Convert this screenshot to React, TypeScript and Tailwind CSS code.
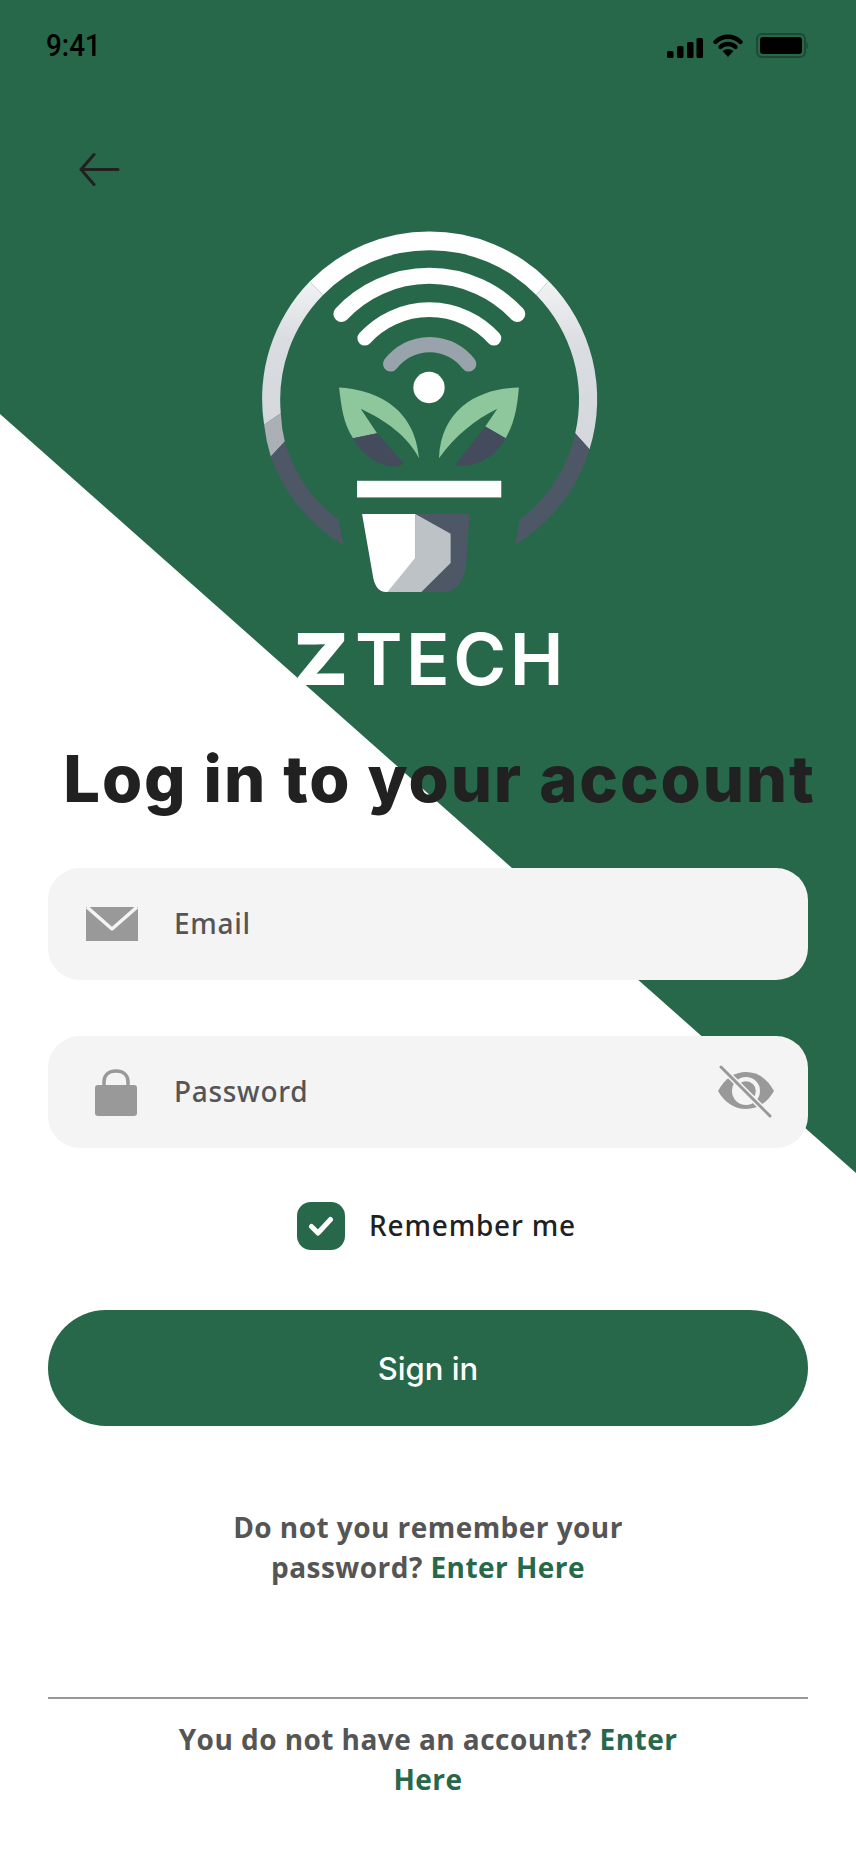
import React from "react";

const Logo = () => (
  <svg viewBox="0 0 1200 1240" className="block w-[400px] h-[413px] mx-auto">
    <defs>
      <linearGradient id="ringL" x1="0" y1="0" x2="0" y2="1">
        <stop offset="0" stopColor="#f1f2f4" />
        <stop offset="0.4" stopColor="#d9dce0" />
        <stop offset="1" stopColor="#d4d8dd" />
      </linearGradient>
    </defs>
    <path d="M245 215 A504 504 0 0 1 962 213 L925 255 A448 448 0 0 0 285 255 Z" fill="#ffffff" />
    <path d="M245 215 A504 504 0 0 0 108 645 L158 610 A448 448 0 0 1 285 255 Z" fill="url(#ringL)" />
    <path d="M108 645 A504 504 0 0 0 128 740 L170 695 A448 448 0 0 1 158 610 Z" fill="#aab0b5" />
    <path d="M128 740 A504 504 0 0 0 345 1005 L332 930 A448 448 0 0 1 170 695 Z" fill="#4d5766" />
    <path d="M962 213 A504 504 0 0 1 1085 718 L1042 670 A448 448 0 0 0 925 255 Z" fill="url(#ringL)" />
    <path d="M1085 718 A504 504 0 0 1 862 1005 L875 930 A448 448 0 0 0 1042 670 Z" fill="#4d5766" />
    <g fill="none" strokeLinecap="round">
      <path d="M340 312 A362 362 0 0 1 868 312" stroke="#ffffff" strokeWidth="48" />
      <path d="M410 385 A262 262 0 0 1 798 385" stroke="#ffffff" strokeWidth="44" />
      <path d="M488 462 A147 147 0 0 1 722 462" stroke="#99a3ab" strokeWidth="46" />
    </g>
    <circle cx="603" cy="533" r="47" fill="#ffffff" />
    <path d="M333 533 C440 540 560 590 573 745 C540 680 470 630 398 597 L447 670 L375 685 C345 640 340 590 333 533 Z" fill="#8fc79c" />
    <path d="M375 685 L447 670 L527 760 L510 770 C450 775 400 730 375 685 Z" fill="#434b5c" />
    <path d="M873 533 C760 535 640 590 633 745 C680 680 740 630 808 597 L772 650 L833 685 C860 640 868 590 873 533 Z" fill="#8fc79c" />
    <path d="M772 650 L833 685 C800 745 750 770 680 767 Z" fill="#434b5c" />
    <rect x="387" y="813" width="433" height="50" fill="#ffffff" />
    <path d="M402 913 H725 L715 1060 C712 1110 685 1147 650 1147 H475 C450 1147 438 1125 434 1095 Z" fill="#4d5766" />
    <path d="M562 913 L668 972 V1060 L580 1147 H475 L562 1045 Z" fill="#bcc2c6" />
    <path d="M402 913 H562 V1045 L478 1147 H475 C450 1147 438 1125 434 1095 Z" fill="#ffffff" />
  </svg>
);

const Signal = () => (
  <svg width="36" height="20" viewBox="0 0 36 20" className="block">
    <rect x="0" y="13" width="6.5" height="7" rx="1.5" fill="#000" />
    <rect x="10" y="8" width="6.5" height="12" rx="1.5" fill="#000" />
    <rect x="20" y="4" width="6.5" height="16" rx="1.5" fill="#000" />
    <rect x="29.5" y="0" width="6.5" height="20" rx="1.5" fill="#000" />
  </svg>
);

const Wifi = () => (
  <svg width="30" height="23" viewBox="0 0 30 23" className="block">
    <path d="M2.5 8 C9.5 1 20.5 1 27.5 8" fill="none" stroke="#000" strokeWidth="4.4" strokeLinecap="round" />
    <path d="M7.5 13 C11.5 9 18.5 9 22.5 13" fill="none" stroke="#000" strokeWidth="4.4" strokeLinecap="round" />
    <path d="M9.5 17 C13 14.2 17 14.2 20.5 17 L15 23 Z" fill="#000" />
  </svg>
);

const Battery = () => (
  <svg width="53" height="25" viewBox="0 0 53 25" className="block">
    <rect x="1" y="1" width="48" height="23" rx="5" fill="none" stroke="#1c4a37" strokeWidth="2" />
    <rect x="4" y="4" width="42" height="17" rx="3" fill="#000" />
    <path d="M50.5 9 C52.5 10 52.5 15 50.5 16 Z" fill="#1c4a37" />
  </svg>
);

const Envelope = () => (
  <svg width="52" height="34" viewBox="0 0 52 34" className="block">
    <rect width="52" height="34" fill="#999999" />
    <path d="M1 0 L26 22 L51 0" fill="none" stroke="#f4f4f4" strokeWidth="3.4" strokeLinejoin="round" />
  </svg>
);

const Lock = () => (
  <svg width="42" height="47" viewBox="0 0 42 47" className="block">
    <path d="M9 18 V13 C9 6 14 2 21 2 C28 2 33 6 33 13 V18" fill="none" stroke="#999999" strokeWidth="3.5" />
    <rect x="0" y="16" width="42" height="31" rx="3" fill="#999999" />
  </svg>
);

const EyeOff = () => (
  <svg width="56" height="54" viewBox="0 0 56 54" className="block">
    <path d="M0 26 C7 13 17 7 28 7 C39 7 49 13 56 26 C49 38 39 44 28 44 C17 44 7 38 0 26 Z" fill="#999999" />
    <circle cx="28" cy="26" r="14" fill="#f4f4f4" />
    <path d="M21 19 A9.9 9.9 0 0 1 35 33 Z" fill="#999999" />
    <path d="M1 0 L54 53" stroke="#f4f4f4" strokeWidth="6" />
    <path d="M3 2 L52 51" stroke="#999999" strokeWidth="3" strokeLinecap="round" />
  </svg>
);

export default function App() {
  return (
    <div className="relative w-[856px] h-[1852px] overflow-hidden bg-white font-['Open_Sans',sans-serif]">
      <div className="absolute inset-0 bg-[#27684b] [clip-path:polygon(0_0,100%_0,100%_1173px,0_414px)]" />
      <div className="relative flex flex-col">
        <div className="mt-[33px] h-[25px] flex items-center justify-between pl-[46px] pr-[47px]">
          <span className="block origin-left scale-x-[0.87] font-['Roboto',sans-serif] font-medium text-[32px] leading-[25px] text-black">9:41</span>
          <div className="flex items-center">
            <div className="mt-[5px]"><Signal /></div>
            <div className="ml-[10px]"><Wifi /></div>
            <div className="ml-[13px]"><Battery /></div>
          </div>
        </div>
        <div className="mt-[95px] ml-[79px] h-[32px]">
          <svg width="41" height="33" viewBox="0 0 41 33" className="block">
            <path d="M39 16.5 H2 M15 1.5 L2 16.5 L15 31.5" fill="none" stroke="#212121" strokeWidth="3" strokeLinecap="round" strokeLinejoin="round" />
          </svg>
        </div>
        <div className="mt-[25px]"><Logo /></div>
        <div className="h-[72px] flex items-center pl-[294px] font-['Inter',sans-serif] text-[72px] leading-[72px] text-white">
          <span className="font-black w-[47px] origin-left scale-x-[1.08]">Z</span>
          <span className="ml-[14px] font-semibold tracking-[3.5px]">TECH</span>
        </div>
        <h1 className="mt-[44px] h-[80px] pl-[23px] text-center font-['Inter',sans-serif] text-[65px] leading-[80px] font-extrabold text-[#212121] tracking-[1.9px] whitespace-nowrap">Log in to your account</h1>
        <div className="mt-[49px] mx-[48px] h-[112px] rounded-[32px] bg-[#f4f4f4] flex items-center pl-[38px]">
          <Envelope />
          <span className="ml-[36px] -mt-[2px] font-['Noto_Sans',sans-serif] text-[28px] font-medium tracking-[0.7px] text-[#555555]">Email</span>
        </div>
        <div className="mt-[56px] mx-[48px] h-[112px] rounded-[32px] bg-[#f4f4f4] flex items-center pl-[47px] pr-[34px]">
          <Lock />
          <span className="ml-[37px] -mt-[2px] font-['Noto_Sans',sans-serif] text-[28px] font-medium tracking-[0.7px] text-[#555555]">Password</span>
          <div className="ml-auto"><EyeOff /></div>
        </div>
        <div className="mt-[54px] h-[48px] pl-[17px] flex items-center justify-center">
          <div className="w-[48px] h-[48px] rounded-[14px] bg-[#27684b] flex items-center justify-center">
            <svg width="26" height="22" viewBox="0 0 26 22"><path d="M3.5 11.5 L10 18 L22.5 4.5" fill="none" stroke="#fff" strokeWidth="5" strokeLinecap="round" strokeLinejoin="round" /></svg>
          </div>
          <span className="ml-[24px] -mt-[2px] font-['Noto_Sans',sans-serif] text-[28px] font-medium tracking-[0.8px] text-[#212121]">Remember me</span>
        </div>
        <div className="mt-[60px] mx-[48px] h-[116px] pt-[2px] rounded-full bg-[#27684b] flex items-center justify-center font-['Inter',sans-serif] text-[31px] font-medium text-white">Sign in</div>
        <p className="mt-[81px] text-center text-[28px] leading-[40px] font-bold tracking-[0.45px] text-[#555555]">
          Do not you remember your<br />password? <span className="text-[#27684b]">Enter Here</span>
        </p>
        <div className="mt-[110px] mx-[48px] h-[2px] bg-[#999999]" />
        <p className="mt-[20px] text-center text-[28px] leading-[40px] font-bold tracking-[0.45px] text-[#555555]">
          You do not have an account? <span className="text-[#27684b]">Enter<br />Here</span>
        </p>
      </div>
    </div>
  );
}
